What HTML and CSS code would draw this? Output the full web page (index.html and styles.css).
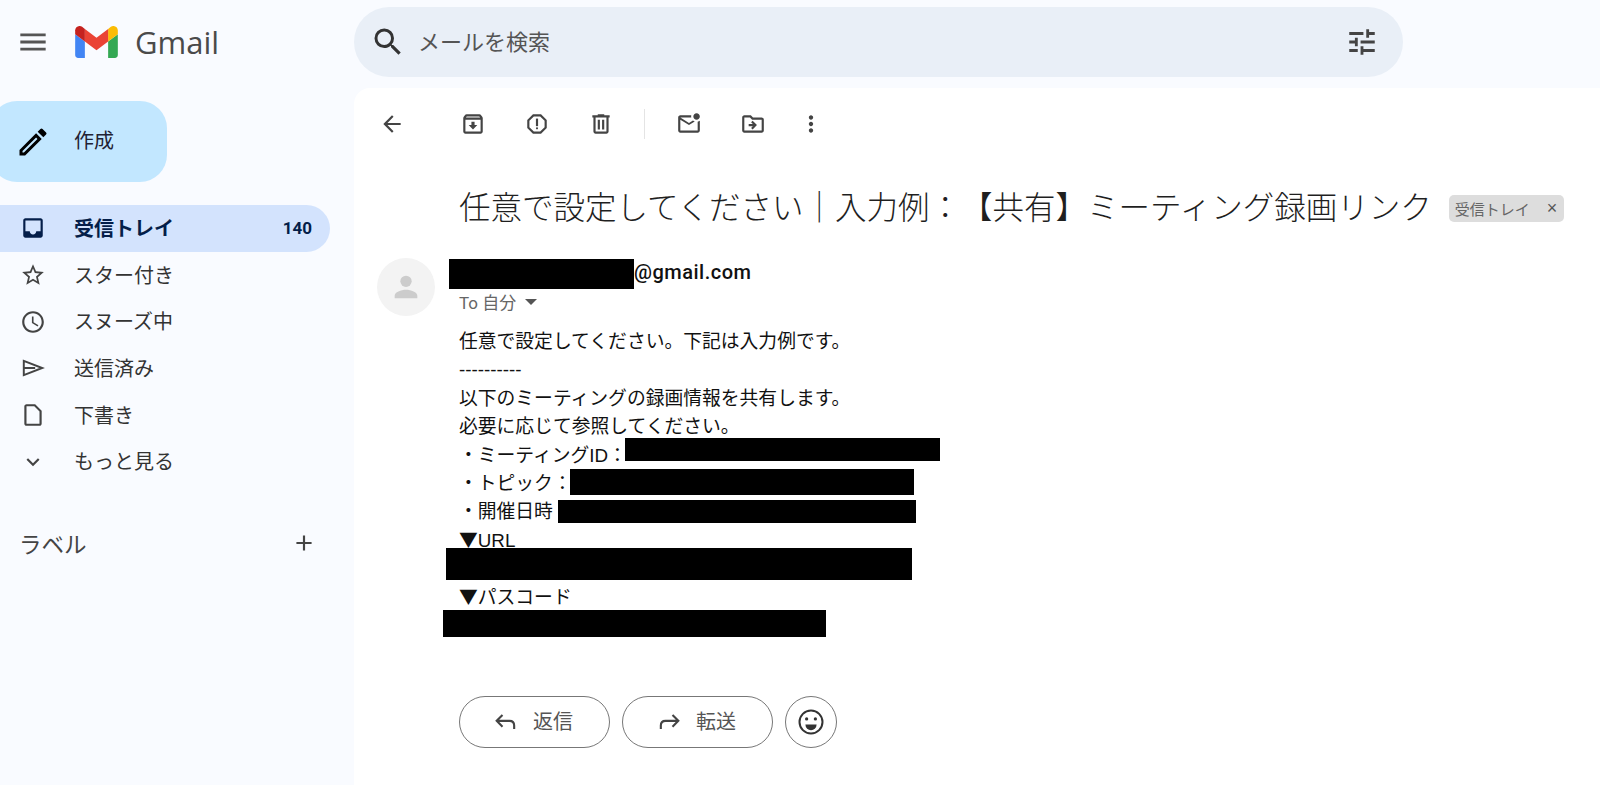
FILE: index.html
```html
<!DOCTYPE html>
<html lang="ja">
<head>
	<meta charset="utf-8">
	<title>Gmail</title>
	<link rel="stylesheet" href="styles.css">
</head>
<body>
	<header class="topbar">
		<div class="brand">
			<svg class="icon menu-icon" viewBox="0 0 24 24"><path d="M3 18h18v-2H3v2zm0-5h18v-2H3v2zm0-7v2h18V6H3z"/></svg>
			<svg class="logo" viewBox="52 42 88 66">
				<path fill="#4285f4" d="M58 108h14V74L52 59v43c0 3.32 2.69 6 6 6"/>
				<path fill="#34a853" d="M120 108h14c3.32 0 6-2.69 6-6V59l-20 15"/>
				<path fill="#fbbc04" d="M120 48v26l20-15v-8c0-7.42-8.47-11.65-14.4-7.2"/>
				<path fill="#ea4335" d="M72 74V48l24 18 24-18v26L96 92"/>
				<path fill="#c5221f" d="M52 51v8l20 15V48l-5.6-4.2c-5.94-4.45-14.4-.22-14.4 7.2"/>
			</svg>
			<span class="wordmark">Gmail</span>
		</div>
		<div class="search">
			<svg class="icon search-icon" viewBox="0 0 24 24"><path d="M15.5 14h-.79l-.28-.27A6.471 6.471 0 0 0 16 9.5 6.5 6.5 0 1 0 9.5 16c1.61 0 3.09-.59 4.23-1.57l.27.28v.79l5 4.99L20.49 19l-4.99-5zm-6 0C7.01 14 5 11.99 5 9.5S7.01 5 9.5 5 14 7.01 14 9.5 11.99 14 9.5 14z"/></svg>
			<span class="search-text">メールを検索</span>
			<svg class="icon tune-icon" viewBox="0 0 24 24"><path d="M3 17v2h6v-2H3zM3 5v2h10V5H3zm10 16v-2h8v-2h-8v-2h-2v6h2zM7 9v2H3v2h4v2h2V9H7zm14 4v-2H11v2h10zm-6-4h2V7h4V5h-4V3h-2v6z"/></svg>
		</div>
	</header>

	<div class="layout">
		<aside class="sidebar">
			<div class="compose">
				<svg class="icon pen-icon" viewBox="0 0 24 24"><path d="M3 17.25V21h3.75L17.81 9.94l-3.75-3.75L3 17.25zM5.92 19H5v-.92l9.06-9.06.92.92L5.92 19zM20.71 5.63l-2.34-2.34a.996.996 0 0 0-1.41 0l-1.83 1.83 3.75 3.75 1.83-1.83a.996.996 0 0 0 0-1.41z"/></svg>
				<span>作成</span>
			</div>
			<nav class="nav">
				<div class="nav-row active">
					<svg class="icon" viewBox="0 0 24 24"><path d="M19 3H5c-1.1 0-2 .9-2 2v14c0 1.1.9 2 2 2h14c1.1 0 2-.9 2-2V5c0-1.1-.9-2-2-2zm0 12h-4c0 1.66-1.35 3-3 3s-3-1.34-3-3H5V5h14v10z"/></svg>
					<span class="nav-label">受信トレイ</span>
					<span class="count">140</span>
				</div>
				<div class="nav-row">
					<svg class="icon" viewBox="0 0 24 24"><path d="M22 9.24l-7.19-.62L12 2 9.19 8.63 2 9.24l5.46 4.73L5.82 21 12 17.27 18.18 21l-1.63-7.03L22 9.24zM12 15.4l-3.76 2.27 1-4.28-3.32-2.88 4.38-.38L12 6.1l1.71 4.04 4.38.38-3.32 2.88 1 4.28L12 15.4z"/></svg>
					<span class="nav-label">スター付き</span>
				</div>
				<div class="nav-row">
					<svg class="icon" viewBox="0 0 24 24"><path d="M11.99 2C6.47 2 2 6.48 2 12s4.47 10 9.99 10C17.52 22 22 17.52 22 12S17.52 2 11.99 2zM12 20c-4.42 0-8-3.58-8-8s3.58-8 8-8 8 3.58 8 8-3.58 8-8 8zm.5-13H11v6l5.25 3.15.75-1.23-4.5-2.67z"/></svg>
					<span class="nav-label">スヌーズ中</span>
				</div>
				<div class="nav-row">
					<svg class="icon send-icon" viewBox="0 0 24 24"><path d="M3.500 5.500L20.500 12 3.500 18.500zM3.500 12H14"/></svg>
					<span class="nav-label">送信済み</span>
				</div>
				<div class="nav-row">
					<svg class="icon" viewBox="0 0 24 24"><path d="M14 2H6c-1.1 0-2 .9-2 2v16c0 1.1.9 2 2 2h12c1.1 0 2-.9 2-2V8l-6-6zm4 18H6V4h7.17L18 8.83V20z"/></svg>
					<span class="nav-label">下書き</span>
				</div>
				<div class="nav-row">
					<svg class="icon" viewBox="0 0 24 24"><path d="M16.59 8.59L12 13.17 7.41 8.59 6 10l6 6 6-6z"/></svg>
					<span class="nav-label">もっと見る</span>
				</div>
			</nav>
			<div class="labels">
				<span>ラベル</span>
				<svg class="icon" viewBox="0 0 24 24"><path d="M19 13h-6v6h-2v-6H5v-2h6V5h2v6h6v2z"/></svg>
			</div>
		</aside>

		<main class="panel">
			<div class="toolbar">
				<svg class="tool" viewBox="0 0 24 24"><path d="M20 11H7.83l5.59-5.59L12 4l-8 8 8 8 1.41-1.41L7.83 13H20v-2z"/></svg>
				<svg class="tool archive" viewBox="0 0 24 24"><path d="M20.54 5.23l-1.39-1.68C18.88 3.21 18.47 3 18 3H6c-.47 0-.88.21-1.16.55L3.46 5.23C3.17 5.57 3 6.02 3 6.5V19c0 1.1.9 2 2 2h14c1.1 0 2-.9 2-2V6.5c0-.48-.17-.93-.46-1.27zM6.24 5h11.52l.81.97H5.44l.8-.97zM5 19V8h14v11H5zm8.45-9h-2.9v3H8l4 4 4-4h-2.55z"/></svg>
				<svg class="tool" viewBox="0 0 24 24"><path d="M15.73 3H8.27L3 8.27v7.46L8.27 21h7.46L21 15.73V8.27L15.73 3zM19 14.9L14.9 19H9.1L5 14.9V9.1L9.1 5h5.8L19 9.1v5.8z"/><circle cx="12" cy="16" r="1"/><path d="M11 7h2v7h-2z"/></svg>
				<svg class="tool" viewBox="0 0 24 24"><path d="M15 4V3H9v1H4v2h1v13c0 1.1.9 2 2 2h10c1.1 0 2-.9 2-2V6h1V4h-5zm2 15H7V6h10v13zM9 8h2v9H9zm4 0h2v9h-2z"/></svg>
				<span class="divider"></span>
				<svg class="tool" viewBox="0 0 24 24"><path d="M22 8.98V18c0 1.1-.9 2-2 2H4c-1.1 0-2-.9-2-2V6c0-1.1.9-2 2-2h10.1c-.06.32-.1.66-.1 1 0 .34.04.68.1 1H4l8 5 3.67-2.29c.47.43 1.02.76 1.63.98L12 13 4 8v10h16V9.9c.74-.15 1.42-.48 2-.92zM16 5c0 1.66 1.34 3 3 3s3-1.34 3-3-1.34-3-3-3-3 1.34-3 3z"/></svg>
				<svg class="tool" viewBox="0 0 24 24"><path d="M20 6h-8l-2-2H4c-1.1 0-1.99.9-1.99 2L2 18c0 1.1.9 2 2 2h16c1.1 0 2-.9 2-2V8c0-1.1-.9-2-2-2zm0 12H4V6h5.17l2 2H20v10zm-8.16-6H8v2h3.84l-1.59 1.59L11.66 17l4-4-4-4-1.41 1.41L11.84 12z"/></svg>
				<svg class="tool more" viewBox="0 0 24 24"><path d="M12 8c1.1 0 2-.9 2-2s-.9-2-2-2-2 .9-2 2 .9 2 2 2zm0 2c-1.1 0-2 .9-2 2s.9 2 2 2 2-.9 2-2-.9-2-2-2zm0 6c-1.1 0-2 .9-2 2s.9 2 2 2 2-.9 2-2-.9-2-2-2z"/></svg>
			</div>

			<div class="subject-row">
				<h1 class="subject">任意で設定してください｜入力例：【共有】ミーティング録画リンク</h1>
				<span class="tag">受信トレイ<b class="tag-x">×</b></span>
			</div>

			<div class="message">
				<div class="avatar">
					<svg viewBox="0 0 24 24"><circle cx="12" cy="8" r="4"/><path d="M12 14c-3.6 0-8 1.7-8 4.2V20h16v-1.8c0-2.5-4.4-4.2-8-4.2z"/></svg>
				</div>
				<div class="message-main">
					<div class="sender"><span class="sender-mask"></span>@gmail.com</div>
					<div class="recipient">To 自分<span class="caret"></span></div>

					<div class="mail-body">
						<div class="line">任意で設定してください。下記は入力例です。</div>
						<div class="line">----------</div>
						<div class="line">以下のミーティングの録画情報を共有します。</div>
						<div class="line">必要に応じて参照してください。</div>
						<div class="line">・ミーティングID：<span class="redact redact-id"></span></div>
						<div class="line">・トピック：<span class="redact redact-topic"></span></div>
						<div class="line">・開催日時<span class="redact redact-date"></span></div>
						<div class="line"><span class="tri">▼</span>URL<span class="redact redact-url"></span></div>
						<div class="line">&nbsp;</div>
						<div class="line"><span class="tri">▼</span>パスコード<span class="redact redact-pass"></span></div>
						<div class="line">&nbsp;</div>
					</div>

					<div class="actions">
						<div class="pill">
							<svg viewBox="0 0 24 24"><path d="M9 6l-5 5 5 5M4 11h11c2.500 0 4 1.500 4 4v3"/></svg>
							<span>返信</span>
						</div>
						<div class="pill">
							<svg viewBox="0 0 24 24"><path d="M15 6l5 5-5 5M20 11H9c-2.500 0-4 1.500-4 4v3"/></svg>
							<span>転送</span>
						</div>
						<div class="emoji">
							<svg viewBox="0 0 24 24"><circle class="face" cx="12" cy="12" r="9.200"/><circle cx="8.500" cy="9.500" r="1.300"/><circle cx="15.500" cy="9.500" r="1.300"/><path d="M7.500 14h9a4.500 4.500 0 0 1-9 0z"/></svg>
						</div>
					</div>
				</div>
			</div>
		</main>
	</div>
</body>
</html>
```

FILE: styles.css
```css
/* page */
body {
	margin: 0;
	height: 785px;
	overflow: hidden;
	background-color: #f9fbff;
	color: #222;
	font-family: "Roboto", "Noto Sans CJK JP", sans-serif;
	text-spacing-trim: space-all;
}

.icon {
	width: 26px;
	height: 26px;
	flex: none;
	fill: #444;
}

/* top bar */
.topbar {
	display: flex;
	height: 88px;
}

.brand {
	display: flex;
	align-items: center;
	width: 354px;
	height: 84px;
	padding-left: 20px;
	box-sizing: border-box;
}

.menu-icon {
	width: 26px;
	height: 26px;
	fill: #555;
	transform: scale(1.3);
}

.logo {
	width: 43px;
	height: 32px;
	margin-left: 29px;
}

.wordmark {
	margin-left: 17px;
	font-family: "Open Sans", sans-serif;
	font-size: 31px;
	color: #4a4a4a;
}

.search {
	display: flex;
	align-items: center;
	width: 1049px;
	height: 70px;
	margin-top: 7px;
	padding: 0 24px 0 16px;
	box-sizing: border-box;
	border-radius: 35px;
	background-color: #e9eff7;
}

.search-icon {
	width: 36px;
	height: 36px;
	fill: #333;
}

.search-text {
	flex: 1;
	margin: 0 0 5px 12px;
	font-size: 22px;
	color: #555;
}

.tune-icon {
	width: 34px;
	height: 34px;
}

/* sidebar */
.layout {
	display: flex;
}

.sidebar {
	width: 354px;
	flex: none;
}

.compose {
	display: flex;
	align-items: center;
	width: 177px;
	height: 81px;
	margin: 13px 0 0 -10px;
	padding-left: 25px;
	box-sizing: border-box;
	border-radius: 27px;
	background-color: #c2e7ff;
	font-size: 20px;
	color: #223;
}

.pen-icon {
	width: 36px;
	height: 36px;
	fill: #000;
}

.compose span {
	margin: 0 0 4px 23px;
}

.nav {
	margin-top: 23px;
}

.nav-row {
	display: flex;
	align-items: center;
	width: 330px;
	height: 46.7px;
	padding: 0 18px 0 20px;
	box-sizing: border-box;
	font-size: 20px;
	color: #333;
}

.nav-label {
	flex: 1;
	margin: 0 0 2px 28px;
}

.send-icon {
	fill: none;
	stroke: #444;
	stroke-width: 1.8;
}

.nav-row.active {
	border-radius: 0 24px 24px 0;
	background-color: #d3e3fd;
	color: #041e49;
	font-weight: 700;
}

.nav-row.active .icon {
	fill: #041e49;
}

.count {
	font-size: 17px;
}

.labels {
	display: flex;
	align-items: center;
	justify-content: space-between;
	height: 40px;
	margin-top: 38px;
	padding: 0 37px 0 19px;
	font-size: 22.5px;
	color: #444;
}

/* mail panel */
.panel {
	flex: 1;
	height: 697px;
	border-radius: 16px 0 0 0;
	background-color: #fff;
}

.toolbar {
	display: flex;
	align-items: center;
	gap: 24px;
	height: 72px;
	padding-left: 18px;
}

.tool {
	width: 26px;
	height: 26px;
	flex: none;
	padding: 0 7px;
	fill: #444;
}

.tool.archive {
	margin-left: 17px;
}

.tool.more {
	margin-left: -6px;
}

.divider {
	width: 1px;
	height: 30px;
	margin-left: -1px;
	background-color: #e4e4e4;
}

.subject-row {
	display: flex;
	align-items: center;
	height: 94px;
	padding-left: 105px;
}

.subject {
	margin: 0 0 4px;
	font-size: 31.5px;
	font-weight: 300;
	white-space: nowrap;
	color: #1f1f1f;
}

.tag {
	display: flex;
	align-items: center;
	height: 27px;
	margin: 2px 0 0 17px;
	padding: 0 7px 0 6px;
	border-radius: 5px;
	background-color: #ddd;
	font-size: 15px;
	color: #666;
}

.tag-x {
	margin-left: 17px;
	font-family: "Liberation Sans", sans-serif;
	font-size: 18px;
	font-weight: 400;
	color: #555;
}

.message {
	display: flex;
	padding-left: 23px;
	margin-top: 4px;
}

.avatar {
	display: flex;
	align-items: center;
	justify-content: center;
	width: 58px;
	height: 58px;
	flex: none;
	border-radius: 50%;
	background-color: #f3f3f3;
}

.avatar svg {
	width: 34px;
	height: 34px;
	fill: #ccc;
}

.message-main {
	margin-left: 24px;
}

.sender {
	display: flex;
	align-items: center;
	height: 28px;
	font-size: 20px;
	font-weight: 500;
	letter-spacing: 0.5px;
	color: #111;
}

.sender-mask {
	width: 185px;
	height: 30px;
	margin: 4px 0 0 -10px;
	background-color: #000;
}

.recipient {
	display: flex;
	align-items: center;
	height: 30px;
	font-size: 17px;
	color: #666;
}

.caret {
	width: 0;
	height: 0;
	margin: 2px 0 0 9px;
	border-style: solid;
	border-width: 6px 6px 0;
	border-color: #555 transparent transparent;
}

.mail-body {
	margin-top: 12px;
	font-family: "Liberation Sans", "Noto Sans CJK JP", sans-serif;
	font-size: 18.8px;
	color: #111;
}

.line {
	position: relative;
	height: 28.4px;
	line-height: 28.4px;
	white-space: nowrap;
}

.tri {
	font-family: "Noto Sans CJK JP", sans-serif;
	line-height: 0;
}

/* blacked-out values lying over the text */
.redact {
	position: absolute;
	background-color: #000;
}

.redact-id {
	left: 166px;
	top: -4px;
	width: 315px;
	height: 23px;
}

.redact-topic {
	left: 111px;
	top: -1px;
	width: 344px;
	height: 26px;
}

.redact-date {
	left: 99px;
	top: 2px;
	width: 358px;
	height: 23px;
}

.redact-url {
	left: -13px;
	top: 21px;
	width: 466px;
	height: 32px;
}

.redact-pass {
	left: -16px;
	top: 26px;
	width: 383px;
	height: 27px;
}

/* reply buttons */
.actions {
	display: flex;
	gap: 12px;
	margin-top: 56px;
}

.pill {
	display: flex;
	align-items: center;
	justify-content: center;
	gap: 13px;
	width: 151px;
	height: 52px;
	padding-right: 4px;
	box-sizing: border-box;
	border: 1px solid #777;
	border-radius: 26px;
	font-size: 20px;
	color: #555;
}

.pill span {
	margin-bottom: 3px;
}

.pill svg {
	width: 28px;
	height: 28px;
	fill: none;
	stroke: #444;
	stroke-width: 1.8;
}

.emoji {
	display: flex;
	align-items: center;
	justify-content: center;
	width: 52px;
	height: 52px;
	box-sizing: border-box;
	border: 1px solid #777;
	border-radius: 50%;
}

.emoji svg {
	width: 30px;
	height: 30px;
	fill: #333;
}

.emoji .face {
	fill: none;
	stroke: #333;
	stroke-width: 1.6;
}
```
